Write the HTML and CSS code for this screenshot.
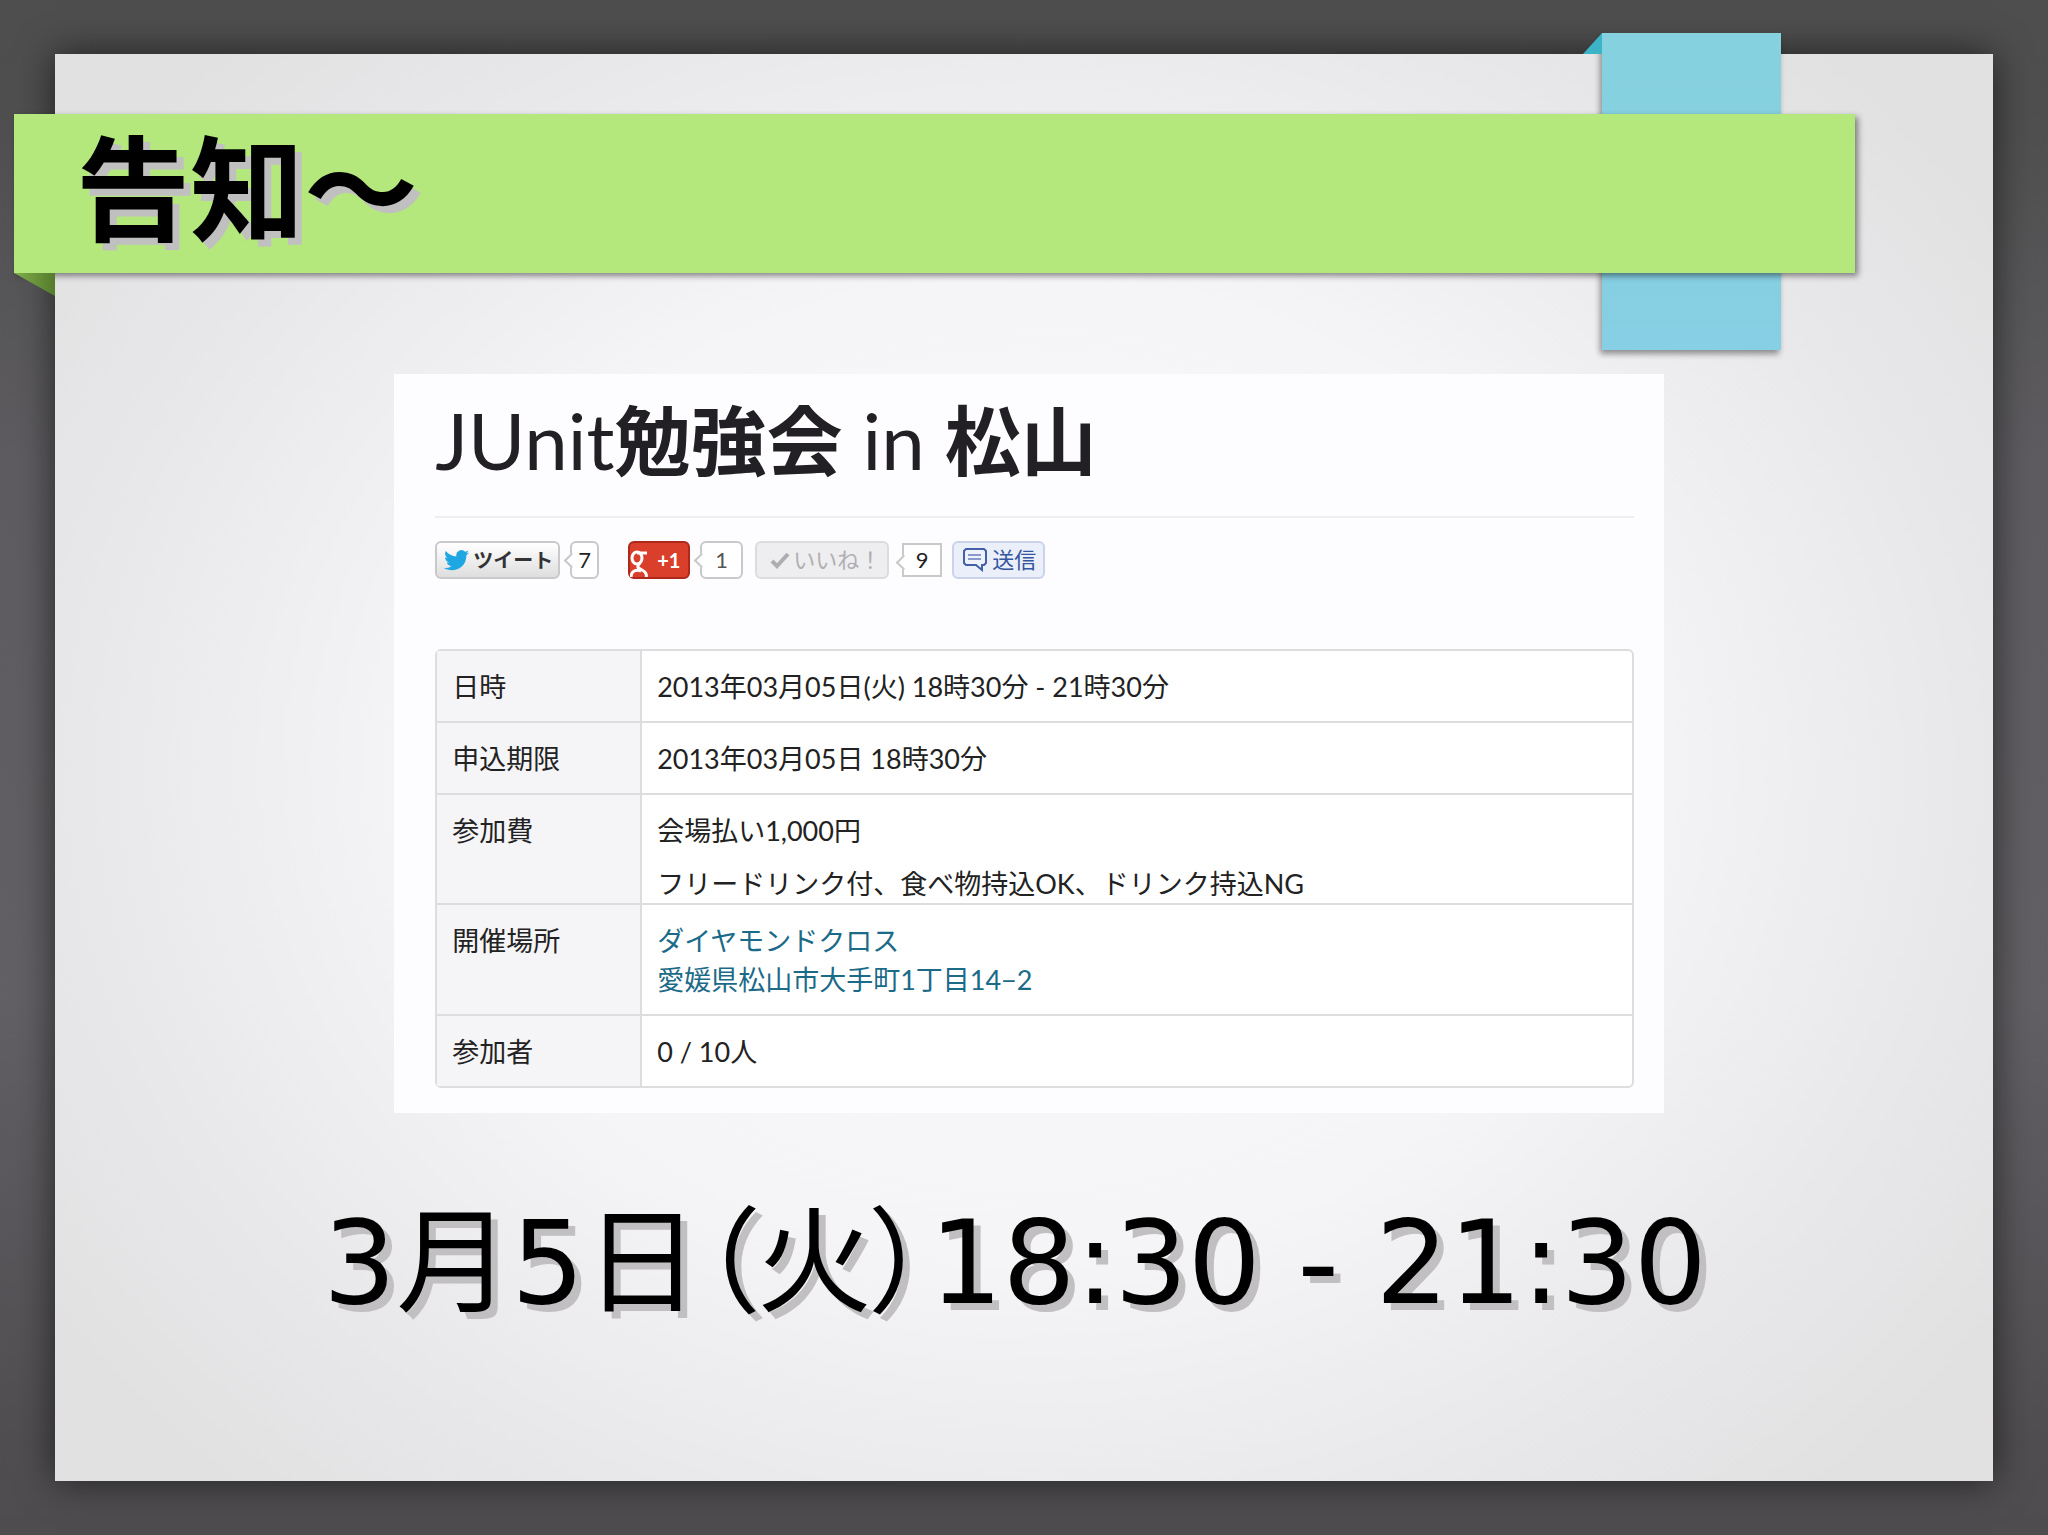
FILE: index.html
```html
<!DOCTYPE html>
<html lang="ja">
<head>
    <meta charset="UTF-8">
    <meta name="viewport" content="width=device-width, initial-scale=1.0">
    <title>告知～</title>
    <link rel="stylesheet" href="styles.css">
</head>
<body>
    <main class="sheet">
        <div class="tape">
            <svg class="tape-fold" viewBox="0 0 19 21"><path d="M19 0V21H0Z" fill="#3cb4c8"/></svg>
        </div>
        <header class="ribbon">
            <h1>告知～</h1>
            <svg class="ribbon-fold" viewBox="0 0 41 23">
                <defs>
                    <linearGradient id="fold" x1="0" y1="0" x2="1" y2="0">
                        <stop offset="0" stop-color="#7fb04a"/>
                        <stop offset="1" stop-color="#557a2c"/>
                    </linearGradient>
                </defs>
                <path d="M0 0H41V23Z" fill="url(#fold)"/>
            </svg>
        </header>

        <section class="event">
            <h2>JUnit<b>勉強会</b> in <b>松山</b></h2>
            <div class="social">
                <button class="btn tweet">
                    <svg width="25" height="21" viewBox="0 0 24 20"><path fill="#1fa7e4" d="M24 2.4c-.9.4-1.800.7-2.800.8 1-.6 1.800-1.600 2.200-2.700-1 .6-2 1-3.100 1.200A4.900 4.900 0 0 0 11.900 6.100C7.800 5.900 4.200 3.900 1.700.9.400 3.200 1.100 6 3.200 7.400c-.8 0-1.600-.2-2.200-.6 0 2.300 1.600 4.400 3.900 4.900-.7.200-1.500.200-2.200.1.600 2 2.400 3.400 4.600 3.400A9.900 9.900 0 0 1 0 17.200C7.500 22 21.500 18.700 21.500 4.900c1-.7 1.800-1.600 2.500-2.500z"/></svg>
                    ツイート
                </button>
                <span class="count count-tweet">7</span>
                <button class="btn plus">
                    <svg width="20" height="34" viewBox="0 0 20 34"><g fill="none" stroke="#fff" stroke-width="3"><path d="M17 10H7"/><ellipse cx="7" cy="15" rx="5" ry="6"/><path d="M10 20C6 24 8 25 12 27C16 29 17 32 16 35M11 28C6 26 1 28 1 34"/></g></svg>
                    +1
                </button>
                <span class="count count-plus">1</span>
                <button class="btn like" disabled>
                    <svg width="20" height="17" viewBox="0 0 20 17"><path d="M2 9L7 14L18 2" fill="none" stroke="#aeaeb0" stroke-width="4"/></svg>
                    いいね！
                </button>
                <span class="count count-like">9</span>
                <button class="btn send">
                    <svg width="24" height="24" viewBox="0 0 24 24"><path d="M3 1H21L23 3V15L21 17H19V22L13 17H3L1 15V3Z" fill="#eef2fa" stroke="#4360a8" stroke-width="2"/><path d="M5 7H18M5 11H18" stroke="#8a98cc" stroke-width="2"/></svg>
                    送信
                </button>
            </div>

            <table>
                <tbody>
                    <tr>
                        <th scope="row">日時</th>
                        <td>2013年03月05日(火) 18時30分 - 21時30分</td>
                    </tr>
                    <tr>
                        <th scope="row">申込期限</th>
                        <td>2013年03月05日 18時30分</td>
                    </tr>
                    <tr>
                        <th scope="row">参加費</th>
                        <td class="fee">
                            <p>会場払い1,000円</p>
                            <p>フリードリンク付、食べ物持込OK、ドリンク持込NG</p>
                        </td>
                    </tr>
                    <tr>
                        <th scope="row">開催場所</th>
                        <td><a href="#">ダイヤモンドクロス</a><br><a href="#">愛媛県松山市大手町1丁目14−2</a></td>
                    </tr>
                    <tr>
                        <th scope="row">参加者</th>
                        <td>0 / 10人</td>
                    </tr>
                </tbody>
            </table>
        </section>

        <p class="date">3月5日（火）18:30 - 21:30</p>
    </main>
</body>
</html>
```
FILE: styles.css
```css
* {
    box-sizing: border-box;
}
body {
    margin: 0;
    min-height: 100vh;
    display: flex;
    padding: 54px 55px;
    background: linear-gradient(#4e4e4e 0, #4f4f4f 7%, #5e5c60 30%, #626064 65%, #504e51 94%, #4e4c4f 100%);
    font-family: Lato, "Noto Sans CJK JP", sans-serif;
    color: #222;
}
h1, h2, p {
    margin: 0;
}
.sheet {
    position: relative;
    flex: 1;
    padding-top: 60px;
    background: radial-gradient(1180px 980px at 50% 50%, #f9f8fa 0, #f5f4f6 50%, #e8e7e9 80%, #e1e1e2 100%);
    box-shadow: 0 0 36px rgba(0, 0, 0, 0.6);
}

/* ribbons */
.tape {
    position: absolute;
    top: -21px;
    right: 212px;
    width: 179px;
    height: 317px;
    background: linear-gradient(#86d1df, #86cfe4);
    box-shadow: -2px 4px 6px rgba(0, 0, 0, 0.4);
}
.tape-fold {
    position: absolute;
    left: -19px;
    top: 0;
    width: 19px;
    height: 21px;
}
.ribbon {
    position: relative;
    width: 95%;
    margin-left: -41px;
    padding: 0 0 22px 62px;
    background: #b4e87c;
    box-shadow: 3px 3px 6px rgba(0, 0, 0, 0.45);
}
.ribbon-fold {
    position: absolute;
    left: 0;
    top: 100%;
    width: 41px;
    height: 23px;
}
h1 {
    font-family: "Noto Sans CJK JP", sans-serif;
    font-size: 114px;
    line-height: 137px;
    color: #000;
    text-shadow: 7px 7px 0 #c0c0c0;
}

/* event card */
.event {
    width: 1270px;
    max-width: 82%;
    margin: 101px 0 0 17.5%;
    padding: 26px 30px 25px 41px;
    background: #fdfcfe;
}
h2 {
    padding-bottom: 35px;
    border-bottom: 2px solid #eeedef;
    font-size: 78px;
    font-weight: normal;
    line-height: 80px;
    color: #222024;
}
h2 b {
    font-size: 76px;
}
.social {
    display: flex;
    align-items: center;
    margin: 22px 0 69px;
    height: 40px;
}
.btn {
    display: flex;
    align-items: center;
    height: 38px;
    padding: 0;
    border: 2px solid #c9c8ca;
    border-radius: 6px;
    font-family: Lato, "Noto Sans CJK JP", sans-serif;
    font-size: 22px;
    line-height: 34px;
    white-space: nowrap;
}
.tweet {
    width: 125px;
    padding-left: 7px;
    gap: 4px;
    background: linear-gradient(#fff, #dedede);
    color: #333;
    font-size: 20px;
    font-weight: bold;
}
.plus {
    width: 62px;
    margin-left: 29px;
    gap: 7px;
    border-color: #b0281a;
    background: #d93f2b;
    color: #fff;
    font-size: 20px;
    font-weight: bold;
}
.like {
    width: 134px;
    margin-left: 12px;
    padding-left: 13px;
    gap: 3px;
    border-color: #dcdbdd;
    background: #eeedef;
    color: #b0afb2;
}
.send {
    width: 93px;
    margin-left: 10px;
    padding-left: 9px;
    gap: 5px;
    border-color: #cbd3ea;
    background: #eaeff9;
    color: #3555a0;
}
.count {
    position: relative;
    height: 38px;
    border: 2px solid #c9c8ca;
    border-radius: 6px;
    background: #fff;
    font-size: 22px;
    line-height: 34px;
    text-align: center;
}
.count::before {
    content: "";
    position: absolute;
    left: -6px;
    top: 12px;
    width: 9px;
    height: 9px;
    border-left: 2px solid #c9c8ca;
    border-bottom: 2px solid #c9c8ca;
    background: #fff;
    transform: rotate(45deg);
}
.count-tweet {
    width: 29px;
    margin-left: 10px;
}
.count-plus {
    width: 43px;
    margin-left: 10px;
    color: #555;
}
.count-like {
    width: 40px;
    height: 34px;
    margin-left: 13px;
    border-radius: 0;
    line-height: 30px;
}

table {
    width: 100%;
    border: 2px solid #dddcdf;
    border-radius: 6px;
    border-spacing: 0;
    background: #fff;
    font-size: 27px;
    line-height: 39px;
}
th, td {
    padding: 16px 15px 15px;
    border-bottom: 2px solid #dddcdf;
    text-align: left;
    vertical-align: top;
}
th {
    width: 205px;
    border-right: 2px solid #dddcdf;
    background: #f5f4f7;
    font-weight: normal;
}
tr:last-child th, tr:last-child td {
    border-bottom: 0;
}
.fee {
    padding-bottom: 0;
}
.fee p + p {
    margin-top: 14px;
}
a {
    color: #1b6a88;
    text-decoration: none;
}

.date {
    margin-top: 78px;
    padding-right: 18px;
    font-family: "DejaVu Sans", "Noto Sans CJK JP", sans-serif;
    font-size: 115px;
    line-height: 144px;
    text-align: center;
    white-space: nowrap;
    color: #000;
    text-shadow: 7px 7px 0 #c1bfc2;
    font-feature-settings: "palt";
}
```
